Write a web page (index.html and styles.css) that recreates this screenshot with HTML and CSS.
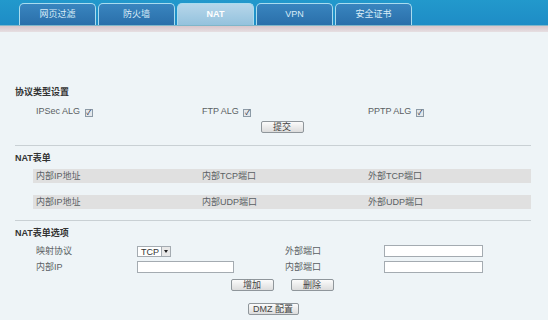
FILE: index.html
```html
<!DOCTYPE html>
<html lang="zh">
<head>
<meta charset="utf-8">
<link rel="stylesheet" href="styles.css">
</head>
<body>
<header class="topbar">
  <nav class="tabs">
    <div class="tab">网页过滤</div>
    <div class="tab">防火墙</div>
    <div class="tab active">NAT</div>
    <div class="tab">VPN</div>
    <div class="tab">安全证书</div>
  </nav>
</header>
<div class="strip"></div>
<main class="content">
  <section class="sec first">
    <h3 class="title">协议类型设置</h3>
    <div class="grid3 alg">
      <label class="cell">IPSec ALG <span class="chk">✓</span></label>
      <label class="cell">FTP ALG <span class="chk">✓</span></label>
      <label class="cell">PPTP ALG <span class="chk">✓</span></label>
    </div>
    <div class="btnrow submit"><button class="btn">提交</button></div>
  </section>
  <hr class="rule">
  <section class="sec">
    <h3 class="title">NAT表单</h3>
    <div class="grid3 band">
      <div class="cell">内部IP地址</div>
      <div class="cell">内部TCP端口</div>
      <div class="cell">外部TCP端口</div>
    </div>
    <div class="grid3 band band2">
      <div class="cell">内部IP地址</div>
      <div class="cell">内部UDP端口</div>
      <div class="cell">外部UDP端口</div>
    </div>
  </section>
  <hr class="rule rule2">
  <section class="sec">
    <h3 class="title">NAT表单选项</h3>
    <div class="grid4 opt1">
      <div class="cell">映射协议</div>
      <div class="cell"><span class="select">TCP<span class="arrow"></span></span></div>
      <div class="cell">外部端口</div>
      <div class="cell"><span class="input wide"></span></div>
    </div>
    <div class="grid4 opt2">
      <div class="cell">内部IP</div>
      <div class="cell"><span class="input"></span></div>
      <div class="cell">内部端口</div>
      <div class="cell"><span class="input wide"></span></div>
    </div>
    <div class="btnrow addrow"><button class="btn">增加</button><button class="btn">删除</button></div>
    <div class="btnrow dmzrow"><button class="btn dmz">DMZ 配置</button></div>
  </section>
</main>
</body>
</html>
```
FILE: styles.css
```css
* { box-sizing: border-box; }
html, body { margin: 0; padding: 0; }
body {
  width: 548px;
  height: 320px;
  overflow: hidden;
  background: #eef4f7;
  font-family: "Liberation Sans", "Noto Sans CJK SC", sans-serif;
  font-size: 9px;
  color: #5a5f63;
}
.topbar {
  height: 26px;
  background: linear-gradient(#2299cc, #1e8cc6);
  padding-left: 19px;
  display: flex;
  align-items: flex-end;
  border-bottom: 1px solid #7fb6c9;
}
.tabs { display: flex; gap: 2px; }
.tab {
  width: 77px;
  height: 22px;
  border: 1px solid #a9dcef;
  border-bottom: none;
  border-radius: 5px 5px 0 0;
  background: linear-gradient(#3985bf, #2a6faa);
  color: #d9ecf7;
  font-size: 9px;
  text-align: center;
  line-height: 20px;
}
.tab.active {
  background: linear-gradient(#b6d6ea, #94c2dd);
  color: #ffffff;
  font-weight: bold;
}
.strip {
  height: 6px;
  background: linear-gradient(#d8c6cb, #e6dfe2);
}
.content { padding: 0 17px 0 15px; }
.sec.first { margin-top: 54px; }
.title {
  margin: 0;
  height: 12px;
  line-height: 12px;
  font-size: 9px;
  font-weight: bold;
  color: #333;
}
.grid3 {
  display: grid;
  grid-template-columns: repeat(3, 1fr);
  margin-left: 18px;
}
.grid4 {
  display: grid;
  grid-template-columns: 101px 148px 99px 1fr;
  margin-left: 18px;
  height: 12px;
  align-items: center;
}
.cell { padding-left: 3px; line-height: 12px; white-space: nowrap; }
.alg { margin-top: 7px; height: 12px; align-items: center; }
.chk {
  display: inline-block;
  width: 8px;
  height: 8px;
  border: 1px solid #8c9aa6;
  background: #e4e8ec;
  font-size: 7px;
  line-height: 6px;
  text-align: center;
  color: #223;
  vertical-align: -1px;
  margin-left: 2px;
}
.btnrow {
  display: flex;
  justify-content: center;
  gap: 17px;
  margin-left: 18px;
}
.submit { margin-top: 4px; }
.btn {
  width: 43px;
  height: 12px;
  padding: 0;
  border: 1px solid #8f969b;
  border-radius: 2px;
  background: linear-gradient(#fbfbfb, #dcdcdc);
  font-family: inherit;
  font-size: 9px;
  line-height: 10px;
  color: #444;
}
.rule {
  margin: 12px 0 0;
  border: none;
  border-top: 1px solid #c9d0d4;
  height: 0;
}
.rule ~ .sec .title { margin-top: 6px; }
.band {
  margin-top: 5px;
  height: 14px;
  background: #e0e0e0;
  align-items: center;
}
.band2 { margin-top: 12px; }
.rule2 { margin-top: 11px; }
.opt1 { margin-top: 6px; }
.opt2 { margin-top: 4px; }
.select {
  display: inline-flex;
  align-items: center;
  width: 34px;
  height: 11px;
  border: 1px solid #a4abb1;
  background: #fff;
  padding-left: 3px;
  font-size: 9px;
  color: #333;
  justify-content: space-between;
  vertical-align: middle;
}
.arrow {
  width: 9px;
  height: 9px;
  border-left: 1px solid #a4abb1;
  background: #e8e8e8;
  position: relative;
}
.arrow::after {
  content: "";
  position: absolute;
  left: 2px;
  top: 3px;
  border-left: 2px solid transparent;
  border-right: 2px solid transparent;
  border-top: 3px solid #222;
}
.input {
  display: block;
  width: 97px;
  height: 12px;
  border: 1px solid #a4abb1;
  background: #fff;
}
.input.wide { width: 99px; }
.addrow { margin-top: 6px; }
.dmzrow { margin-top: 12px; margin-left: 0; }
.btn.dmz { width: 51px; }
```
